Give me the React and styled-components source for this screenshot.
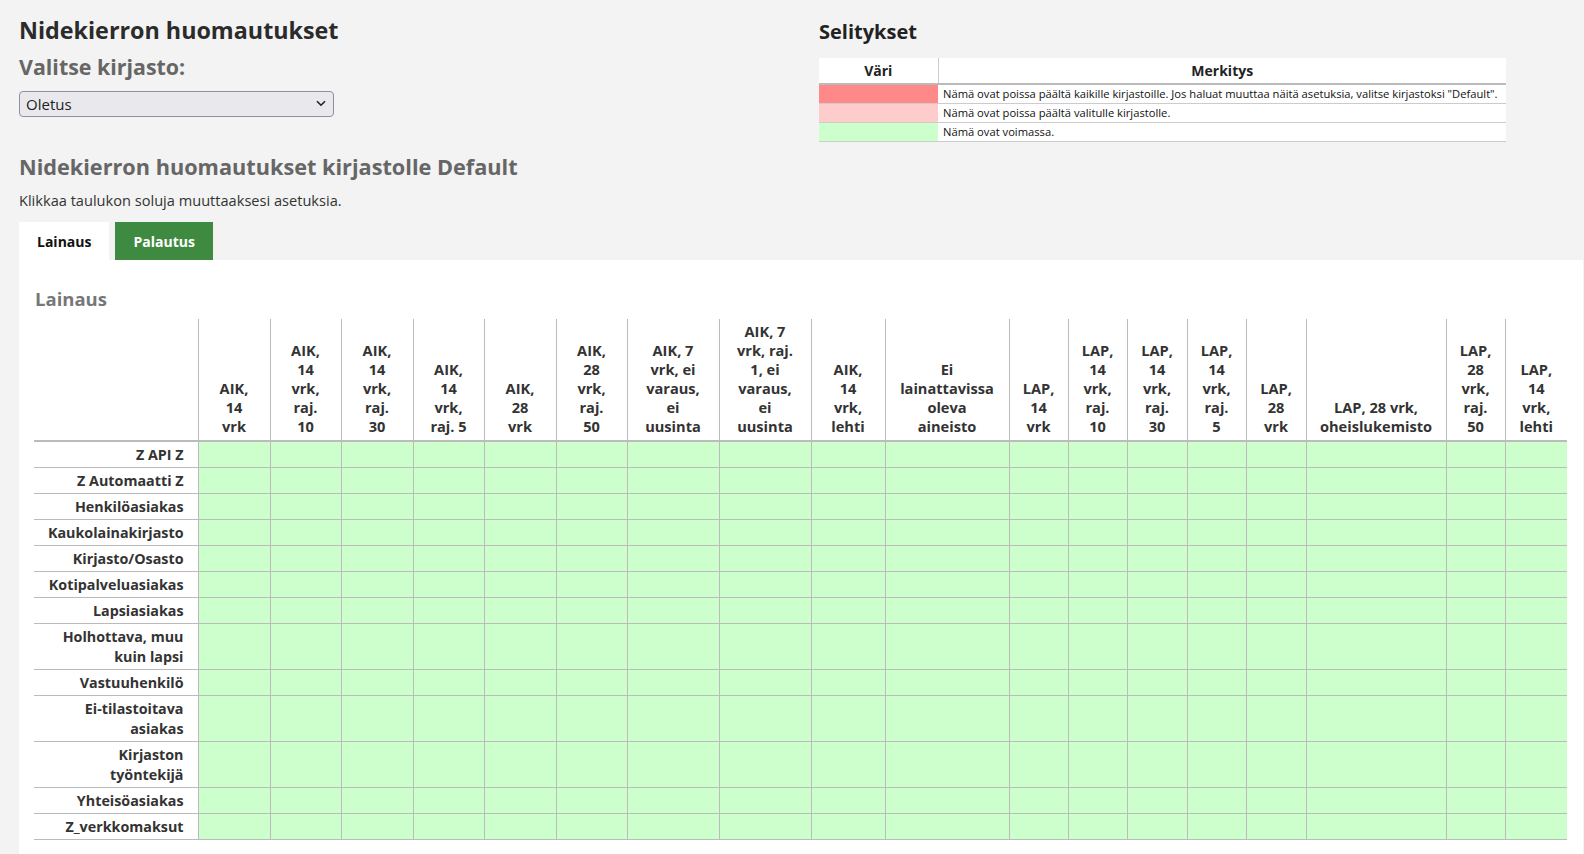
import React from 'react';
import styled, { createGlobalStyle } from 'styled-components';

const GlobalStyle = createGlobalStyle`
  body {
    margin: 0;
    background-color: #f2f3f2;
    font-family: "Open Sans", "Noto Sans", sans-serif;
    color: #333333;
  }
`;

const Page = styled.div`
  padding: 14px 1px 0 19px;
`;

const Top = styled.div`
  display: grid;
  grid-template-columns: 800px 687px;
`;

const Title = styled.h1`
  margin: 0;
  font-size: 23.3px;
  line-height: 32px;
  font-weight: 700;
  color: #2b2b2b;
`;

const SubTitle = styled.h2`
  margin: 6px 0 0;
  font-size: 21.4px;
  line-height: 30px;
  font-weight: 700;
  color: #666666;
`;

const SelectWrap = styled.div`
  position: relative;
  width: 315px;
  margin-top: 9px;
`;

const Select = styled.select`
  appearance: none;
  width: 100%;
  height: 26px;
  padding: 0 24px 0 6px;
  font-family: inherit;
  font-size: 15px;
  color: #222222;
  background-color: #e9e9ed;
  border: 1px solid #8f8f9d;
  border-radius: 4px;
`;

const Chevron = styled.svg`
  position: absolute;
  right: 8px;
  top: 9px;
  pointer-events: none;
`;

const SectionTitle = styled.h2`
  margin: 35px 0 0;
  font-size: 21.7px;
  line-height: 30px;
  font-weight: 700;
  color: #666666;
`;

const Hint = styled.p`
  margin: 8px 0 0;
  font-size: 14.6px;
  line-height: 20px;
`;

const LegendTitle = styled.h3`
  margin: 4px 0 0;
  font-size: 20px;
  line-height: 28px;
  font-weight: 700;
  color: #222222;
`;

const LegendTable = styled.table`
  margin-top: 12px;
  width: 687px;
  border-collapse: collapse;
  table-layout: fixed;
  background-color: #ffffff;
`;

const LegendHead = styled.th`
  height: 25px;
  padding: 0;
  font-size: 14px;
  font-weight: 700;
  text-align: center;
  color: #222222;
  border-bottom: 2px solid #bbbbbb;
  & + & {
    border-left: 1px solid #cccccc;
  }
`;

const Swatch = styled.td`
  height: 18px;
  padding: 0;
  background-color: ${p => p.color};
  border-bottom: 1px solid #cccccc;
`;

const LegendText = styled.td`
  padding: 0 5px;
  font-size: 11.2px;
  line-height: 18px;
  color: #111111;
  border-bottom: 1px solid #cccccc;
  white-space: nowrap;
`;

const Tabs = styled.div`
  display: flex;
  gap: 6px;
  margin-top: 12px;
`;

const Tab = styled.div`
  height: 38px;
  padding: 0 18px;
  display: flex;
  align-items: center;
  font-size: 14px;
  font-weight: 700;
  color: ${p => (p.active ? '#111111' : '#ffffff')};
  background-color: ${p => (p.active ? '#ffffff' : '#3f8a41')};
`;

const Panel = styled.div`
  background-color: #ffffff;
  padding: 26px 15px 15px;
`;

const PanelTitle = styled.h3`
  margin: 0 0 0 1px;
  font-size: 18.5px;
  line-height: 26px;
  font-weight: 700;
  color: #777777;
`;

const Grid = styled.table`
  margin-top: 7px;
  width: 1533px;
  border-collapse: collapse;
  table-layout: fixed;
`;

const HeadCell = styled.th`
  padding: 3px 2px 4px;
  font-size: 14.6px;
  line-height: 19px;
  font-weight: 700;
  text-align: center;
  vertical-align: bottom;
  white-space: nowrap;
  color: #333333;
  border-bottom: 2px solid #bbbbbb;
  border-left: ${p => (p.blank ? 'none' : '1px solid #bbbbbb')};
`;

const RowLabel = styled.th`
  padding: 3px 14px 2px 5px;
  font-size: 14.3px;
  line-height: 20px;
  font-weight: 700;
  text-align: right;
  white-space: nowrap;
  color: #333333;
  border-bottom: 1px solid #bbbbbb;
`;

const Cell = styled.td`
  padding: 0;
  cursor: pointer;
  background-color: ${p => p.color};
  border-bottom: 1px solid #bbbbbb;
  border-left: 1px solid #bbbbbb;
`;

const COLORS = {
  all: '#ff8888',
  library: '#ffcccc',
  on: '#ccffcc'
};

const legend = [
  { color: COLORS.all, text: 'Nämä ovat poissa päältä kaikille kirjastoille. Jos haluat muuttaa näitä asetuksia, valitse kirjastoksi "Default".' },
  { color: COLORS.library, text: 'Nämä ovat poissa päältä valitulle kirjastolle.' },
  { color: COLORS.on, text: 'Nämä ovat voimassa.' }
];

const columns = [
  { width: 72, lines: ['AIK,', '14', 'vrk'] },
  { width: 71, lines: ['AIK,', '14', 'vrk,', 'raj.', '10'] },
  { width: 72, lines: ['AIK,', '14', 'vrk,', 'raj.', '30'] },
  { width: 71, lines: ['AIK,', '14', 'vrk,', 'raj. 5'] },
  { width: 72, lines: ['AIK,', '28', 'vrk'] },
  { width: 71, lines: ['AIK,', '28', 'vrk,', 'raj.', '50'] },
  { width: 92, lines: ['AIK, 7', 'vrk, ei', 'varaus,', 'ei', 'uusinta'] },
  { width: 92, lines: ['AIK, 7', 'vrk, raj.', '1, ei', 'varaus,', 'ei', 'uusinta'] },
  { width: 74, lines: ['AIK,', '14', 'vrk,', 'lehti'] },
  { width: 124, lines: ['Ei', 'lainattavissa', 'oleva', 'aineisto'] },
  { width: 59, lines: ['LAP,', '14', 'vrk'] },
  { width: 59, lines: ['LAP,', '14', 'vrk,', 'raj.', '10'] },
  { width: 60, lines: ['LAP,', '14', 'vrk,', 'raj.', '30'] },
  { width: 59, lines: ['LAP,', '14', 'vrk,', 'raj.', '5'] },
  { width: 60, lines: ['LAP,', '28', 'vrk'] },
  { width: 140, lines: ['LAP, 28 vrk,', 'oheislukemisto'] },
  { width: 59, lines: ['LAP,', '28', 'vrk,', 'raj.', '50'] },
  { width: 62, lines: ['LAP,', '14', 'vrk,', 'lehti'] }
];

const rows = [
  ['Z API Z'],
  ['Z Automaatti Z'],
  ['Henkilöasiakas'],
  ['Kaukolainakirjasto'],
  ['Kirjasto/Osasto'],
  ['Kotipalveluasiakas'],
  ['Lapsiasiakas'],
  ['Holhottava, muu', 'kuin lapsi'],
  ['Vastuuhenkilö'],
  ['Ei-tilastoitava', 'asiakas'],
  ['Kirjaston', 'työntekijä'],
  ['Yhteisöasiakas'],
  ['Z_verkkomaksut']
];

const Lines = ({ lines }) =>
  lines.map((line, i) => (
    <React.Fragment key={line + i}>
      {i > 0 && <br />}
      {line}
    </React.Fragment>
  ));

function App() {
  return (
    <Page>
      <GlobalStyle />
      <Top>
        <div>
          <Title>Nidekierron huomautukset</Title>
          <SubTitle>Valitse kirjasto:</SubTitle>
          <SelectWrap>
            <Select defaultValue="default">
              <option value="default">Oletus</option>
            </Select>
            <Chevron width="10" height="7" viewBox="0 0 10 7">
              <path d="M1 1.2 L5 5.2 L9 1.2" fill="none" stroke="#222" strokeWidth="1.6" />
            </Chevron>
          </SelectWrap>
          <SectionTitle>Nidekierron huomautukset kirjastolle Default</SectionTitle>
          <Hint>Klikkaa taulukon soluja muuttaaksesi asetuksia.</Hint>
        </div>
        <div>
          <LegendTitle>Selitykset</LegendTitle>
          <LegendTable>
            <colgroup>
              <col style={{ width: 119 }} />
              <col />
            </colgroup>
            <thead>
              <tr>
                <LegendHead>Väri</LegendHead>
                <LegendHead>Merkitys</LegendHead>
              </tr>
            </thead>
            <tbody>
              {legend.map(item => (
                <tr key={item.color}>
                  <Swatch color={item.color} />
                  <LegendText>{item.text}</LegendText>
                </tr>
              ))}
            </tbody>
          </LegendTable>
        </div>
      </Top>
      <Tabs>
        <Tab active>Lainaus</Tab>
        <Tab>Palautus</Tab>
      </Tabs>
      <Panel>
        <PanelTitle>Lainaus</PanelTitle>
        <Grid>
          <colgroup>
            <col style={{ width: 164 }} />
            {columns.map((col, i) => (
              <col key={i} style={{ width: col.width }} />
            ))}
          </colgroup>
          <thead>
            <tr>
              <HeadCell blank />
              {columns.map((col, i) => (
                <HeadCell key={i}>
                  <Lines lines={col.lines} />
                </HeadCell>
              ))}
            </tr>
          </thead>
          <tbody>
            {rows.map(label => (
              <tr key={label[0]}>
                <RowLabel>
                  <Lines lines={label} />
                </RowLabel>
                {columns.map((col, i) => (
                  <Cell key={i} color={COLORS.on} />
                ))}
              </tr>
            ))}
          </tbody>
        </Grid>
      </Panel>
    </Page>
  );
}

export default App;
